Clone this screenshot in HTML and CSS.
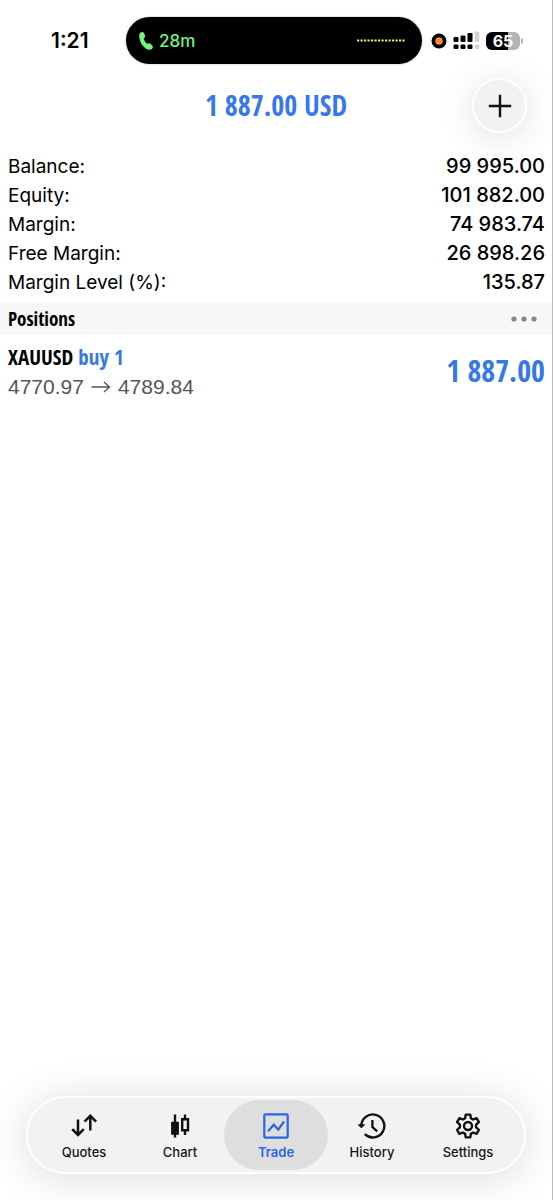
FILE: index.html
```html
<!DOCTYPE html>
<html lang="en">
<head>
<meta charset="utf-8">
<meta name="viewport" content="width=device-width, initial-scale=1">
<title>Trade</title>
<link rel="stylesheet" href="styles.css">
</head>
<body>
<div class="app">
  <div class="status">
    <time class="clock">1:21</time>
    <div class="island">
      <svg class="phone" width="15" height="20" viewBox="0 0 15 20"><path d="M1.500 1.600C2.600.5 4.400.7 5.100 2.200l.9 2.200c.3.900.1 1.600-.6 2.300l-.7.8c.5 2.100 1.700 4 3.400 5.200l1.200-.4c.8-.3 1.600-.1 2.200.5l1.700 1.700c1 1.100.8 2.500-.3 3.400-1.400 1.100-3.700 1.200-5.900-.2C3.200 15.200.5 10.500.2 5.600.1 3.900.6 2.500 1.500 1.600Z" fill="#72f57c"/></svg>
      <span class="call">28m</span>
      <svg class="wave" width="50" height="3" viewBox="0 0 50 3"><path d="M1 1.500H50" fill="none" stroke="#eeea50" stroke-width="2.200" stroke-dasharray="2.200 1.300"/></svg>
    </div>
    <div class="indicators">
      <svg width="16" height="16" viewBox="0 0 16 16"><circle cx="8" cy="8" r="7.500"/><circle cx="8" cy="8" r="3.800" fill="#f58a3c"/></svg>
      <svg width="27" height="19" viewBox="0 0 27 19"><g fill="#000"><rect x=".5" y="6" width="5" height="5" rx="1.200"/><rect x="7.500" y="4.500" width="5" height="6.500" rx="1.200"/><rect x="14.500" y="2" width="5" height="9" rx="1.200"/><rect x=".5" y="13.500" width="5" height="4.500" rx="1.200"/><rect x="7.500" y="13.500" width="5" height="4.500" rx="1.200"/><rect x="14.500" y="13.500" width="5" height="4.500" rx="1.200"/></g><g fill="#d2d2d2"><rect x="21.700" y="0.500" width="4.600" height="10.500" rx="1.200"/><rect x="21.700" y="13.500" width="4.600" height="4.500" rx="1.200"/></g></svg>
      <div class="battery">65</div>
    </div>
  </div>

  <header class="top">
    <h1 class="total">1 887.00 USD</h1>
    <button class="add" type="button" aria-label="New order"><svg width="24" height="24" viewBox="0 0 24 24"><path d="M12 .8v22.400M.8 12h22.400" stroke="#111" stroke-width="2.400"/></svg></button>
  </header>

  <dl class="account">
    <div class="line"><dt>Balance:</dt><dd>99 995.00</dd></div>
    <div class="line"><dt>Equity:</dt><dd>101 882.00</dd></div>
    <div class="line"><dt>Margin:</dt><dd>74 983.74</dd></div>
    <div class="line"><dt>Free Margin:</dt><dd>26 898.26</dd></div>
    <div class="line"><dt>Margin Level (%):</dt><dd>135.87</dd></div>
  </dl>

  <div class="section">
    <h2 class="heading">Positions</h2>
    <button class="more" type="button" aria-label="More"><svg width="26" height="6" viewBox="0 0 26 6" fill="#858585"><circle cx="3" cy="3" r="2.600"/><circle cx="13" cy="3" r="2.600"/><circle cx="23" cy="3" r="2.600"/></svg></button>
  </div>

  <div class="position">
    <div class="deal">
      <div class="symbol">XAUUSD <span class="side">buy 1</span></div>
      <div class="prices">4770.97 <svg width="20" height="12" viewBox="0 0 20 12"><path d="M.5 6H18.500M13 1l5.500 5L13 11" fill="none" stroke="#55555a" stroke-width="1.400"/></svg> 4789.84</div>
    </div>
    <div class="profit">1 887.00</div>
  </div>

  <nav class="tabs">
    <button class="tab" type="button"><svg width="28" height="28" viewBox="0 0 28 28" fill="none" stroke="#111" stroke-width="2.500"><path d="M8 7.500V23M2.200 17.200 8 23l5.800-5.800M20.300 18.500V3.800M14.500 9.600l5.800-5.800 5.800 5.800"/></svg>Quotes</button>
    <button class="tab" type="button"><svg width="28" height="28" viewBox="0 0 28 28" fill="none" stroke="#111" stroke-width="2.400"><path d="M9 2.500v23M19 2.500v4.500M19 18v5"/><path d="M5.800 10.500h6.400v11.500H5.800Z" fill="#111" stroke-width="1.400"/><path d="M16.200 7.200h5.800v11h-5.800Z"/></svg>Chart</button>
    <button class="tab active" type="button" aria-current="page"><svg width="28" height="28" viewBox="0 0 28 28" fill="none" stroke="#2767e4" stroke-width="2.200"><rect x="2.300" y="2.300" width="23.400" height="23.400" rx="1"/><path d="m6 19.200 5.800-6.500 4.500 5L22 9.300" stroke-width="2.200"/></svg>Trade</button>
    <button class="tab" type="button"><svg width="28" height="28" viewBox="0 0 28 28" fill="none" stroke="#111" stroke-width="2.400"><path d="M3.300 14A11.500 11.500 0 1 1 6.800 22.200"/><path d="m.2 12.700 3.200 3.200 3.200-3.200Z" fill="#111" stroke-width=".8"/><path d="M14.400 8v7l4.800 4.300" stroke-width="2.300"/></svg>History</button>
    <button class="tab" type="button"><svg width="28" height="28" viewBox="0 0 28 28" fill="none" stroke="#111" stroke-width="2.400" stroke-linejoin="round"><path d="M11.700 2.600h4.600l.6 3.600 2.200 1.300 3.500-1.300 2.300 4-2.800 2.400v2.800l2.800 2.400-2.300 4-3.500-1.300-2.200 1.300-.6 3.600h-4.600l-.6-3.600-2.200-1.300-3.500 1.300-2.300-4 2.800-2.400v-2.800l-2.800-2.400 2.300-4 3.500 1.300 2.200-1.300Z"/><circle cx="14" cy="14" r="4"/></svg>Settings</button>
  </nav>
</div>
</body>
</html>
```
FILE: styles.css
```css
* { box-sizing: border-box; }
body { margin: 0; background: #fff; color: #000; font-family: Inter, "Liberation Sans", sans-serif; }
h1, h2, dl, dd { margin: 0; }
button { padding: 0; border: 0; background: none; color: inherit; font: inherit; }
svg { display: block; flex: none; }
.app { display: flex; flex-direction: column; min-height: 100vh; border-right: 1px solid #bcbcbc; }

.status { display: grid; grid-template-columns: 126px 1fr 130px; align-items: center; padding-top: 17px; }
.clock { padding-left: 51px; font-size: 21px; font-weight: 600; line-height: 24px; }
.island { display: flex; align-items: center; height: 47px; padding: 0 16px 0 13px; border-radius: 24px; background: #000; box-shadow: 0 0 2px #9cb49c; }
.call { margin-left: 5px; color: #72f57c; font-size: 17px; font-weight: 500; }
.wave { margin-left: auto; }
.indicators { display: flex; align-items: center; padding-left: 9px; gap: 6px; }
.battery { position: relative; width: 34px; height: 18px; border-radius: 6px; background: linear-gradient(90deg, #000 65%, #b3b3b3 65%); color: #fff; font-size: 16px; font-weight: 700; line-height: 18px; text-align: center; }
.battery::after { content: ""; position: absolute; left: 35px; top: 6px; width: 2px; height: 6px; border-radius: 0 2px 2px 0; background: #b3b3b3; }

.top { display: grid; grid-template-columns: 1fr auto 1fr; align-items: center; padding: 14px 25px 0; }
.total, .profit, .symbol, .heading { font-family: "Open Sans Condensed", "Roboto Condensed", "Liberation Sans Narrow", "Open Sans", sans-serif; font-weight: 700; }
.total { grid-column: 2; padding-bottom: 2px; color: #3578ea; font-size: 28px; line-height: 32px; }
.add { display: grid; place-items: center; justify-self: end; width: 55px; height: 55px; border: 2px solid #fff; border-radius: 50%; background: #f2f2f2; box-shadow: 0 4px 36px #00000020; }

.account { padding: 19px 7px 5px 8px; font-size: 20px; line-height: 29px; }
.line { display: flex; justify-content: space-between; }
.line dt { font-size: 19px; }
.line dd { font-weight: 500; }

.section { display: flex; align-items: center; justify-content: space-between; height: 33px; padding: 0 15px 0 8px; background: #f7f7f7; }
.heading { font-size: 19px; line-height: 24px; }
.position { display: flex; align-items: center; justify-content: space-between; padding: 7px 7px 0 8px; }
.symbol { font-size: 21px; line-height: 30px; }
.side, .profit { color: #3578ea; }
.prices { display: flex; align-items: center; gap: 7px; color: #55555a; font-family: "Liberation Sans", sans-serif; font-size: 21px; line-height: 30px; }
.profit { padding-bottom: 2px; font-size: 30px; line-height: 36px; }

.tabs { display: flex; height: 78px; margin: auto 26px 26px; padding: 2px 8px; border: 2px solid #fff; border-radius: 39px; background: #f2f2f2; box-shadow: 0 4px 44px #00000024; }
.tab { display: flex; flex: 1; flex-direction: column; align-items: center; gap: 4px; margin: 0 -4px; padding-top: 12px; border-radius: 35px; color: #161616; font-size: 13px; font-weight: 500; line-height: 16px; }
.active { background: #dedede; color: #2767e4; font-weight: 600; }
```
